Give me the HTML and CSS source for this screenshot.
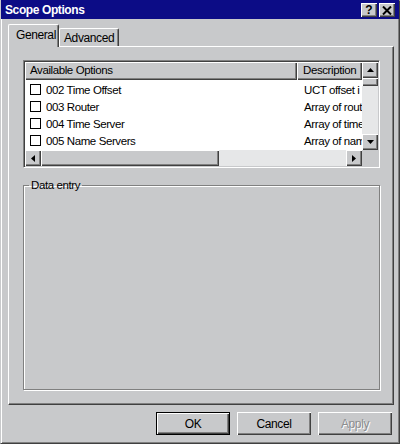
FILE: index.html
```html
<!DOCTYPE html>
<html>
<head>
<meta charset="utf-8">
<link rel="stylesheet" href="styles.css">
</head>
<body>
<div class="window">
  <div class="titlebar">
    <span class="title">Scope Options</span>
    <div class="caption-buttons">
      <span class="cap-btn">?</span>
      <span class="cap-btn close">
        <svg width="10" height="9" viewBox="0 0 10 9"><path d="M1 0.5 L9 8.5 M9 0.5 L1 8.5" stroke="#000" stroke-width="2"/></svg>
      </span>
    </div>
  </div>
  <div class="client">
    <div class="tabs">
      <div class="tab active">General</div>
      <div class="tab">Advanced</div>
    </div>
    <div class="panel">
      <div class="listview">
        <div class="lv-main">
          <div class="lv-content">
            <div class="lv-header">
              <div class="col col-name">Available Options</div>
              <div class="col col-desc">Description</div>
            </div>
            <div class="lv-rows">
              <div class="row"><span class="chk"></span><span class="name">002 Time Offset</span><span class="desc">UCT offset i</span></div>
              <div class="row"><span class="chk"></span><span class="name">003 Router</span><span class="desc">Array of rout</span></div>
              <div class="row"><span class="chk"></span><span class="name">004 Time Server</span><span class="desc">Array of time</span></div>
              <div class="row"><span class="chk"></span><span class="name">005 Name Servers</span><span class="desc">Array of nam</span></div>
            </div>
          </div>
          <div class="vscroll">
            <div class="sb-btn"><svg width="7" height="4" viewBox="0 0 7 4"><path d="M3.5 0 L7 4 L0 4 Z" fill="#000"/></svg></div>
            <div class="sb-thumb-v"></div>
            <div class="sb-track"></div>
            <div class="sb-btn"><svg width="7" height="4" viewBox="0 0 7 4"><path d="M0 0 L7 0 L3.5 4 Z" fill="#000"/></svg></div>
          </div>
        </div>
        <div class="hscroll-row">
          <div class="hscroll">
            <div class="sb-btn"><svg width="4" height="7" viewBox="0 0 4 7"><path d="M4 0 L4 7 L0 3.5 Z" fill="#000"/></svg></div>
            <div class="sb-thumb-h"></div>
            <div class="sb-track"></div>
            <div class="sb-btn"><svg width="4" height="7" viewBox="0 0 4 7"><path d="M0 0 L0 7 L4 3.5 Z" fill="#000"/></svg></div>
          </div>
          <div class="corner"></div>
        </div>
      </div>
      <fieldset class="group">
        <legend>Data entry</legend>
      </fieldset>
    </div>
    <div class="buttons">
      <button class="btn default">OK</button>
      <button class="btn">Cancel</button>
      <button class="btn disabled">Apply</button>
    </div>
  </div>
</div>
</body>
</html>
```
FILE: styles.css
```css
* { box-sizing: border-box; }
html, body {
  margin: 0;
  padding: 0;
  width: 400px;
  height: 444px;
  overflow: hidden;
  background: #c8c9cb;
  font-family: "Liberation Sans", Arial, sans-serif;
  font-size: 11.5px;
  color: #000;
}
.window {
  width: 400px;
  height: 444px;
  display: flex;
  flex-direction: column;
  border-top: 1px solid #c8c9cb;
  border-left: 1px solid #c8c9cb;
  border-right: 1px solid #404040;
  border-bottom: 1px solid #404040;
  box-shadow: inset 1px 1px 0 #fff, inset -1px -1px 0 #808080;
  padding: 2px;
}
.titlebar {
  height: 19px;
  margin: -3px -2px 0 -2px;
  background: #0c0c86;
  display: flex;
  align-items: center;
  justify-content: space-between;
  padding: 1px 4px 0 4px;
}
.title {
  color: #fff;
  font-weight: bold;
  font-size: 12px;
  letter-spacing: -0.4px;
}
.caption-buttons {
  display: flex;
  gap: 2px;
}
.cap-btn {
  width: 16px;
  height: 14px;
  background: #c8c9cb;
  box-shadow: inset 1px 1px 0 #fff, inset -1px -1px 0 #404040, inset -2px -2px 0 #808080;
  display: flex;
  align-items: center;
  justify-content: center;
  font-weight: bold;
  font-size: 12px;
  line-height: 1;
}
.client {
  flex: 1;
  display: flex;
  flex-direction: column;
  padding: 5px 3px 5px 5px;
}
.tabs {
  display: flex;
  align-items: flex-end;
  height: 22px;
  position: relative;
  z-index: 1;
}
.tab {
  height: 18px;
  padding: 2px 4px 0 4px;
  border-top: 1px solid #fff;
  border-left: 1px solid #fff;
  border-right: 1px solid #404040;
  box-shadow: inset -1px 0 0 #808080;
  border-radius: 2px 2px 0 0;
  background: #c8c9cb;
  font-size: 12px;
  letter-spacing: -0.4px;
}
.tab.active {
  height: 23px;
  margin-bottom: -1px;
  padding: 3px 7px 0 7px;
  width: 51px;
}
.panel {
  flex: 1;
  border-top: 1px solid #fff;
  border-left: 1px solid #fff;
  border-right: 1px solid #404040;
  border-bottom: 1px solid #404040;
  box-shadow: inset -1px -1px 0 #808080;
  padding: 13px 13px 14px 14px;
  display: flex;
  flex-direction: column;
  gap: 11px;
}
.listview {
  height: 108px;
  flex: none;
  border-top: 1px solid #808080;
  border-left: 1px solid #808080;
  border-right: 1px solid #fff;
  border-bottom: 1px solid #fff;
  box-shadow: inset 1px 1px 0 #404040, inset -1px -1px 0 #c8c9cb;
  padding: 1px;
  display: flex;
  flex-direction: column;
  background: #fff;
}
.lv-main {
  flex: 1;
  display: flex;
  min-height: 0;
}
.lv-content {
  flex: 1;
  overflow: hidden;
  display: flex;
  flex-direction: column;
}
.lv-header {
  display: flex;
  height: 18px;
  flex: none;
}
.col {
  background: #c8c9cb;
  box-shadow: inset 1px 1px 0 #fff, inset -1px -1px 0 #404040, inset -2px -2px 0 #808080;
  padding: 2px 5px 0 5px;
  font-size: 11.5px;
  letter-spacing: -0.4px;
  white-space: nowrap;
  overflow: hidden;
}
.col-name { width: 272px; flex: none; }
.col-desc { flex: 1; padding-left: 6px; }
.lv-rows {
  padding-top: 1px;
}
.row {
  height: 17px;
  display: flex;
  align-items: center;
  white-space: nowrap;
  font-size: 11.5px;
  letter-spacing: -0.4px;
}
.chk {
  width: 11px;
  height: 11px;
  border: 1px solid #000;
  margin-left: 5px;
  margin-right: 5px;
  flex: none;
}
.name { width: 258px; flex: none; }
.desc { flex: none; }
.vscroll {
  width: 16px;
  display: flex;
  flex-direction: column;
  flex: none;
}
.sb-btn {
  width: 16px;
  height: 16px;
  flex: none;
  background: #c8c9cb;
  box-shadow: inset 1px 1px 0 #fff, inset -1px -1px 0 #404040, inset -2px -2px 0 #808080;
  display: flex;
  align-items: center;
  justify-content: center;
}
.sb-thumb-v {
  height: 8px;
  flex: none;
  background: #c8c9cb;
  box-shadow: inset 1px 1px 0 #fff, inset -1px -1px 0 #404040, inset -2px -2px 0 #808080;
}
.sb-track {
  flex: 1;
  background: #e6e7e8;
}
.hscroll-row {
  height: 16px;
  display: flex;
  flex: none;
}
.hscroll {
  flex: 1;
  display: flex;
}
.sb-thumb-h {
  width: 178px;
  flex: none;
  background: #c8c9cb;
  box-shadow: inset 1px 1px 0 #fff, inset -1px -1px 0 #404040, inset -2px -2px 0 #808080;
}
.corner {
  width: 16px;
  background: #c8c9cb;
}
.group {
  flex: 1;
  margin: 0;
  padding: 0;
  border: 1px solid #808080;
  box-shadow: 1px 1px 0 #fff, inset 1px 1px 0 #fff;
  min-width: 0;
}
.group legend {
  margin-left: 5px;
  padding: 0 2px;
  font-size: 11.5px;
  letter-spacing: -0.4px;
}
.buttons {
  height: 31px;
  flex: none;
  display: flex;
  justify-content: flex-end;
  align-items: flex-end;
  gap: 7px;
  padding-right: 2px;
  padding-bottom: 1px;
}
.btn {
  width: 74px;
  height: 23px;
  margin: 0;
  padding: 0;
  background: #c8c9cb;
  border: none;
  box-shadow: inset 1px 1px 0 #fff, inset -1px -1px 0 #404040, inset -2px -2px 0 #808080;
  font-family: "Liberation Sans", Arial, sans-serif;
  font-size: 12px;
  letter-spacing: -0.4px;
  color: #000;
}
.btn.default {
  border: 1px solid #000;
}
.btn.disabled {
  color: #8c8d8f;
  text-shadow: 1px 1px 0 #fff;
}
```
